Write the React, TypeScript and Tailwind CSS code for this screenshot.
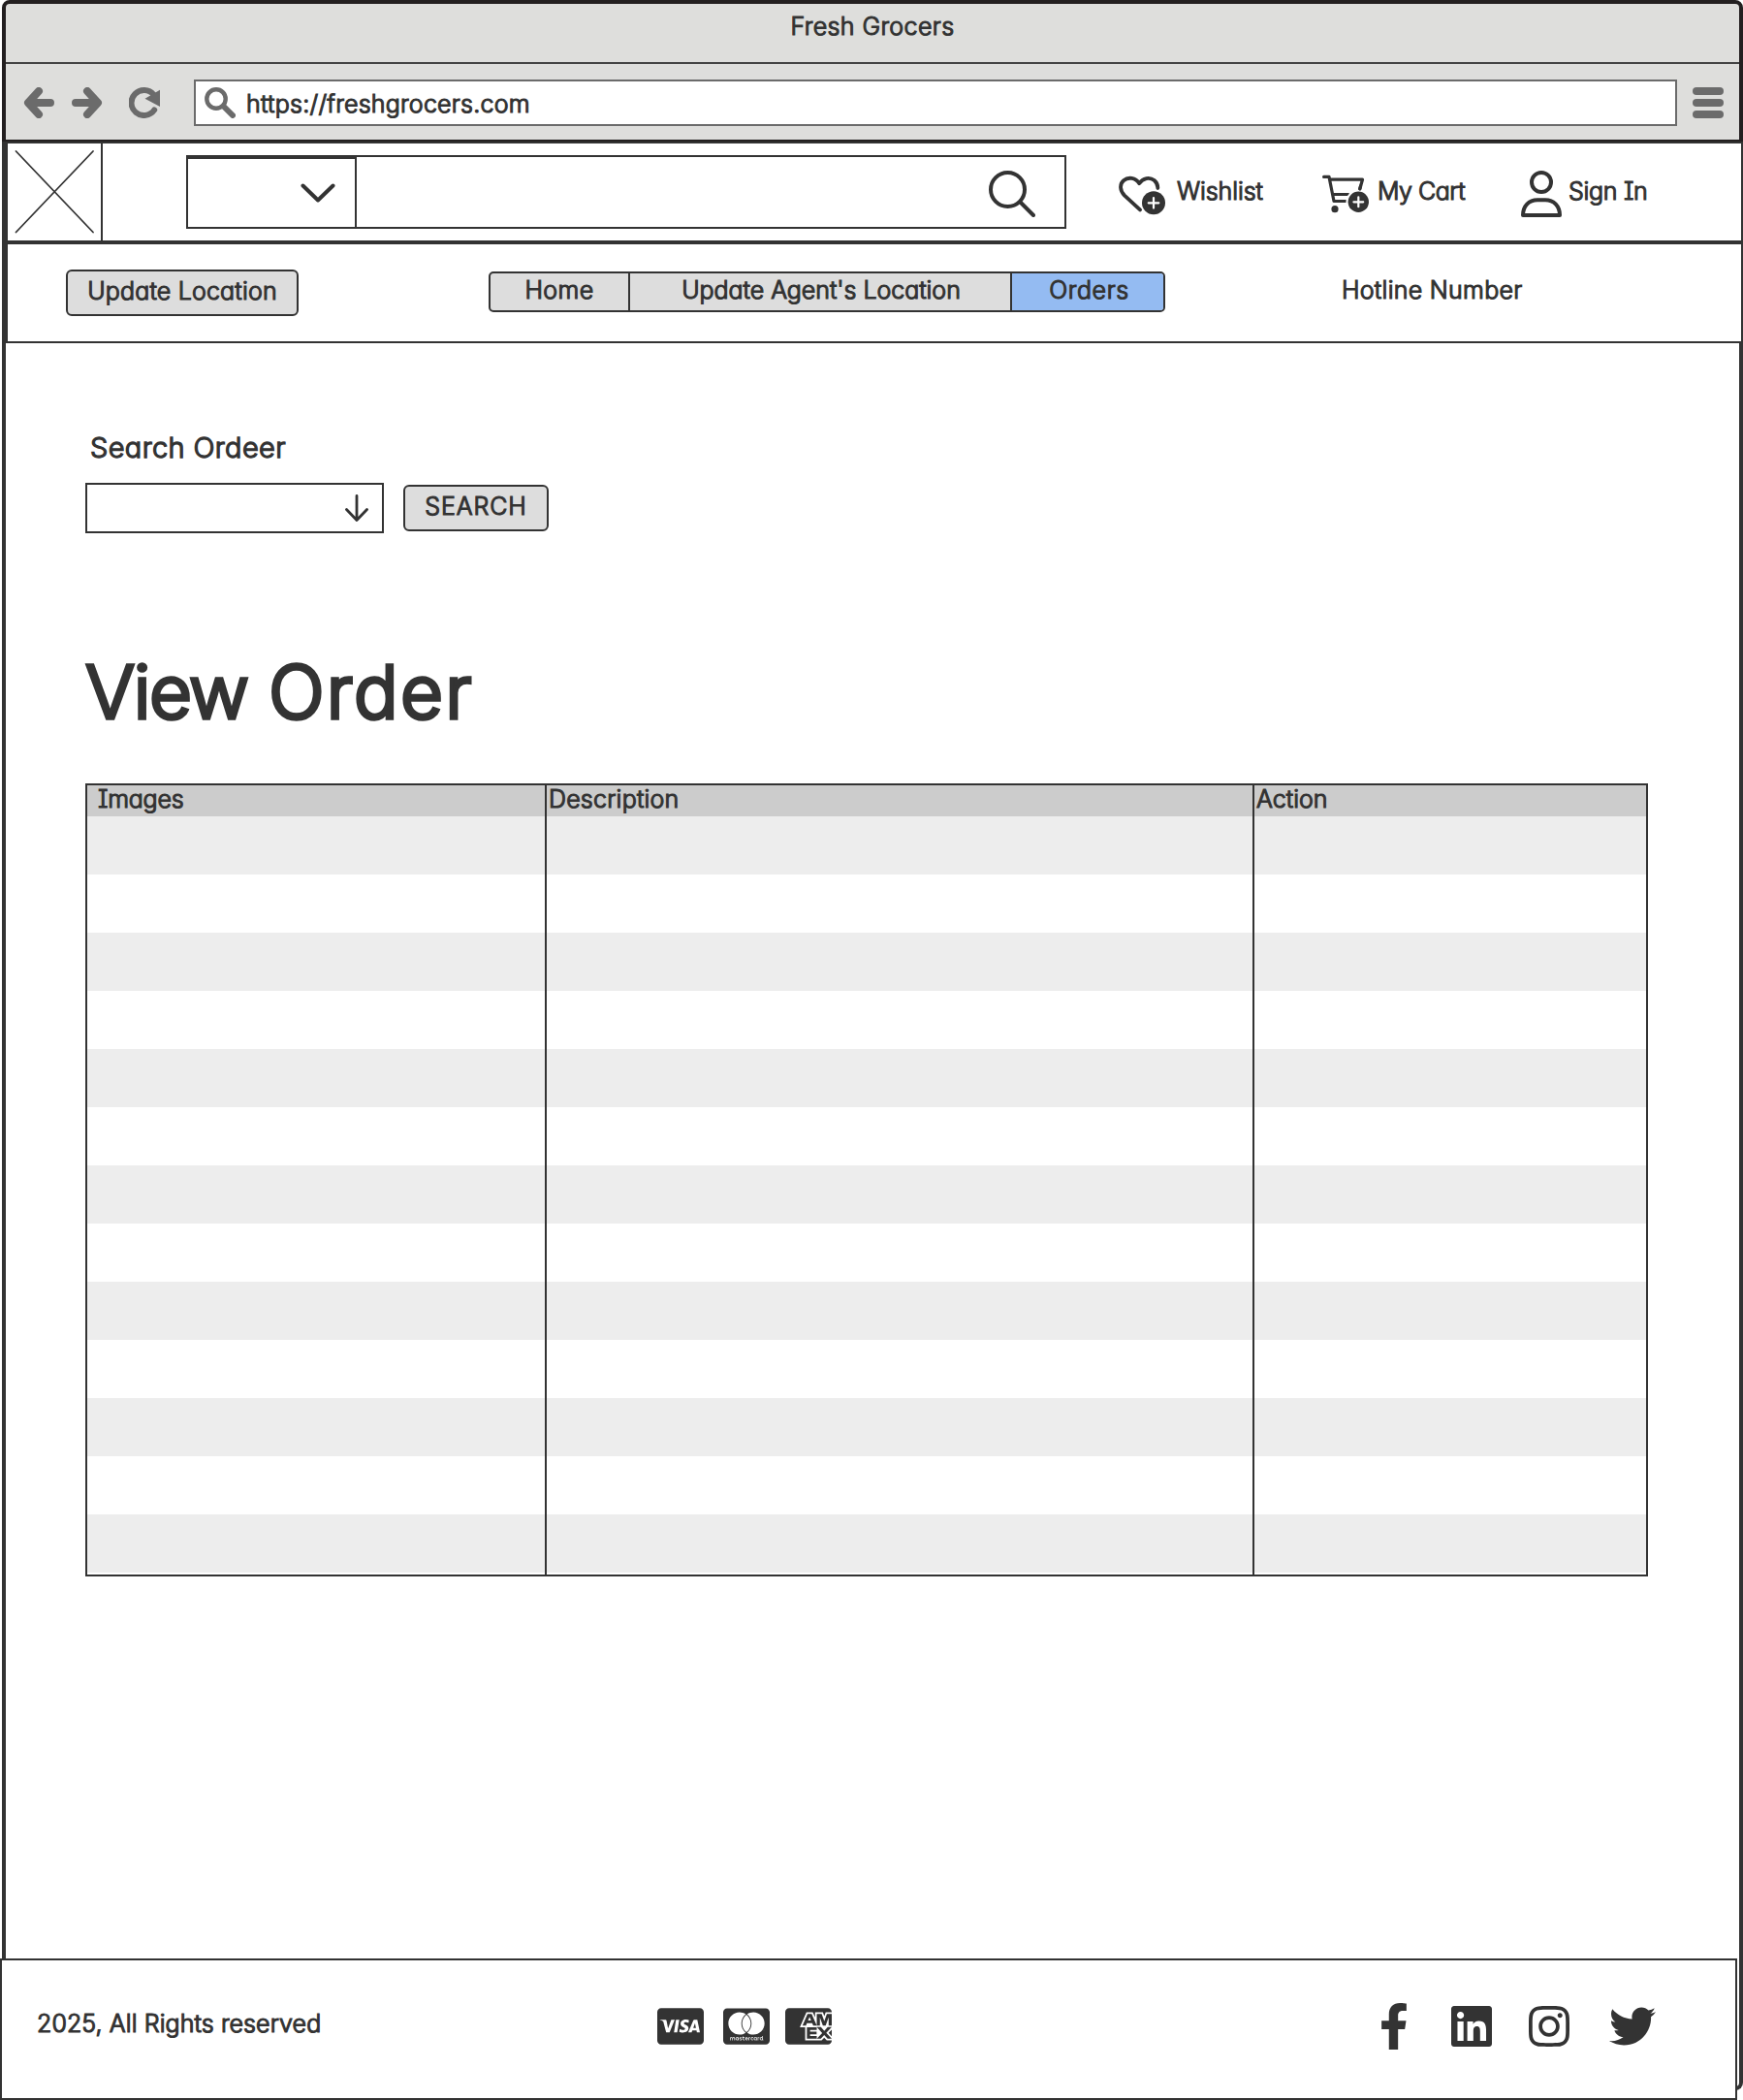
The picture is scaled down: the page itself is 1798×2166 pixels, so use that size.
import type { ReactNode } from "react";
import { FaFacebookF, FaInstagram, FaLinkedin, FaTwitter } from "react-icons/fa";
import { FaCcAmex, FaCcMastercard, FaCcVisa } from "react-icons/fa6";

const STRIPES = Array.from({ length: 13 }, (_, i) => i);

function BrowserChrome() {
  return (
    <div className="h-[146px] rounded-t-lg border-4 border-b-2 border-[#231f20] bg-[#dededc]">
      <div className="h-[62px] border-b-2 border-[#444] pt-2 text-center tracking-[0.4px]">Fresh Grocers</div>
      <div className="flex h-[78px] items-center pt-0.5 text-[#6b6b6b]">
        <svg className="ml-[18px] h-8 w-8" viewBox="0 0 32 32" fill="none" stroke="currentColor" strokeWidth="8" strokeLinecap="round" strokeLinejoin="round">
          <path d="M16 4 5 16 16 28M6 16H28" />
        </svg>
        <svg className="ml-[18px] h-8 w-8" viewBox="0 0 32 32" fill="none" stroke="currentColor" strokeWidth="8" strokeLinecap="round" strokeLinejoin="round">
          <path d="M16 4 27 16 16 28M26 16H4" />
        </svg>
        <svg className="ml-[27px] h-8 w-8" viewBox="0 0 32 32" fill="none">
          <path d="M25.5 7.7A13 13 0 1 0 26.2 23.4" stroke="currentColor" strokeWidth="6" strokeLinecap="round" />
          <path d="M32 2.7V20L16.5 11.7Z" fill="currentColor" />
        </svg>
        <div className="ml-[35px] flex h-12 w-[1530px] items-center border-2 border-[#6b6b6b] bg-white">
          <svg className="ml-[9px] h-8 w-8" viewBox="0 0 32 32" fill="none" stroke="currentColor">
            <circle cx="12" cy="12" r="9.7" strokeWidth="4.4" />
            <path d="M20 20 29 29" strokeWidth="6" strokeLinecap="round" />
          </svg>
          <span className="ml-[11px] pt-px tracking-[0.23px] text-[#333]">https://freshgrocers.com</span>
        </div>
        <div className="ml-4 flex w-8 flex-col gap-1">
          <div className="h-2 rounded-full bg-[#6b6b6b]" />
          <div className="h-2 rounded-full bg-[#6b6b6b]" />
          <div className="h-2 rounded-full bg-[#6b6b6b]" />
        </div>
      </div>
    </div>
  );
}

function HeartPlus() {
  return (
    <svg className="h-12 w-12" viewBox="0 0 48 48" fill="none" stroke="currentColor" strokeLinecap="round">
      <path d="M22 42.4 6 27.6C1 22.6.8 16 5 12.3 10 8 17.4 9.3 21.2 15.2 25 9.5 32 8.3 36.7 12 39.4 14.5 40.4 17.5 40.3 20" strokeWidth="3.8" strokeLinejoin="round" />
      <circle cx="36" cy="35.3" r="12" fill="currentColor" stroke="none" />
      <path d="M36 30V40.6M30.7 35.3H41.3" stroke="white" strokeWidth="2.2" />
    </svg>
  );
}

function CartPlus() {
  return (
    <svg className="h-12 w-12" viewBox="0 0 48 48" fill="none" stroke="currentColor" strokeLinecap="round" strokeLinejoin="round">
      <path d="M1.6 8.4H7L12 33.5H25M7.6 11.2H41.5L38.7 21M10.8 26.5H27" strokeWidth="3.2" />
      <circle cx="13" cy="41.7" r="3.6" fill="currentColor" stroke="none" />
      <circle cx="37.3" cy="34.3" r="12.8" fill="white" stroke="none" />
      <path d="M39.6 18 38.7 21" strokeWidth="3.2" />
      <circle cx="37.3" cy="34.3" r="10.7" fill="currentColor" stroke="none" />
      <path d="M37.3 29.4V39.2M32.4 34.3H42.2" stroke="white" strokeWidth="2.2" />
    </svg>
  );
}

function Header() {
  return (
    <header className="relative flex h-[104px] w-[1792px] items-center border-2 border-[#333] bg-white">
      <svg className="h-[100px] w-[98px] border-r-2 border-[#333]" viewBox="0 0 96 100" fill="none" stroke="#333" strokeWidth="1.8" strokeLinecap="round">
        <path d="M8.5 8 88 91.5M88 8 8.5 91.5" />
      </svg>
      <div className="ml-[86px] flex h-[76px] w-[908px] items-start justify-between border-2 border-[#333]">
        <div className="flex h-[72px] w-[174px] items-center justify-end border-t-2 border-r-2 border-[#333] pr-5">
          <svg className="h-5 w-9" viewBox="0 0 36 20" fill="none" stroke="currentColor" strokeWidth="4" strokeLinecap="round" strokeLinejoin="round">
            <path d="M2.5 2.5 18 17.5 33.5 2.5" />
          </svg>
        </div>
        <svg className="mt-3.5 mr-[30px] h-12 w-12" viewBox="0 0 48 48" fill="none" stroke="currentColor" strokeWidth="4" strokeLinecap="round">
          <circle cx="19.5" cy="19.5" r="17.5" />
          <path d="M32.5 32.5 46 46" />
        </svg>
      </div>
      <div className="ml-[54px] flex items-center">
        <HeartPlus />
        <span className="ml-3 w-[150px] pb-[3px] tracking-[-0.1px]">Wishlist</span>
        <CartPlus />
        <span className="ml-[9px] w-[148px] pb-[3px] tracking-[-0.5px]">My Cart</span>
        <svg className="mt-1 h-12 w-[42px]" viewBox="0 0 42 48" fill="none" stroke="currentColor" strokeWidth="4" strokeLinejoin="round">
          <circle cx="21" cy="12" r="10" />
          <path d="M2 46C2 36.500 8 30.300 17 30.300H25C34 30.300 40 36.500 40 46Z" />
        </svg>
        <span className="ml-[7px] pb-[3px] tracking-[-0.3px]">Sign In</span>
      </div>
    </header>
  );
}

function Nav() {
  return (
    <nav className="relative flex h-[104px] w-[1792px] items-start border-2 border-[#333] bg-white">
      <button className="mt-[26px] ml-[60px] flex h-12 w-60 items-center justify-center rounded-md border-2 border-[#333] bg-[#ddd] pb-1 tracking-[0.17px]">
        Update Location
      </button>
      <div className="mt-7 ml-[196px] flex h-[42px] w-[698px] overflow-hidden rounded-[5px] border-2 border-[#333] bg-[#ddd]">
        <a className="flex w-36 items-center justify-center border-r-2 border-[#333] pb-1 tracking-[0.4px]">Home</a>
        <a className="flex w-[394px] items-center justify-center border-r-2 border-[#333] pb-1 pl-0.5 tracking-[-0.05px]">Update Agent's Location</a>
        <a className="flex flex-1 items-center justify-center bg-[#94bbf2] pb-1 pl-[3px] tracking-[0.6px]">Orders</a>
      </div>
      <span className="mt-8 ml-[182px] tracking-[0.27px]">Hotline Number</span>
    </nav>
  );
}

function Column({ className, title }: { className: string; title: ReactNode }) {
  return (
    <div className={className}>
      {title}
      {STRIPES.map((i) => (
        <div key={i} className="h-[60px] odd:bg-white even:bg-[#ededed]" />
      ))}
    </div>
  );
}

function Orders() {
  return (
    <main className="pl-[82px]">
      <label className="mt-[90px] block pl-[5px] text-[29px] leading-9 tracking-[0.35px] [-webkit-text-stroke:1.3px_#333]">Search Ordeer</label>
      <div className="mt-[18px] flex items-center">
        <div className="flex h-[52px] w-[308px] items-center justify-end border-2 border-[#333] pr-3.5">
          <svg className="h-7 w-6" viewBox="0 0 24 28" fill="none" stroke="currentColor" strokeWidth="2.8" strokeLinecap="round" strokeLinejoin="round">
            <path d="M12 1.500V26.500M1.500 15.500 12 26.500 22.500 15.500" />
          </svg>
        </div>
        <button className="ml-5 flex h-12 w-[150px] items-center justify-center rounded-md border-2 border-[#333] bg-[#ddd] pb-1 tracking-[0.9px]">
          SEARCH
        </button>
      </div>
      <h1 className="mt-[117px] text-[76px] leading-[92px] [-webkit-text-stroke:3.6px_#333]">
        <span className="tracking-[-1.5px]">View</span> <span className="tracking-[2.2px]">Order</span>
      </h1>
      <div className="mt-[49px] flex h-[818px] w-[1612px] border-2 border-[#333]">
        <Column className="w-[474px] border-r-2 border-[#333]" title={<div className="h-8 bg-[#ccc] pl-[11px] leading-7 tracking-[-0.25px]">Images</div>} />
        <Column className="w-[730px] border-r-2 border-[#333]" title={<div className="h-8 bg-[#ccc] pl-0.5 leading-7 tracking-[0.2px]">Description</div>} />
        <Column className="w-[404px]" title={<div className="h-8 bg-[#ccc] pl-0.5 leading-7">Action</div>} />
      </div>
    </main>
  );
}

function Footer() {
  return (
    <footer className="relative -mt-[136px] flex h-[146px] w-[1792px] items-start border-2 border-[#333] bg-white">
      <span className="mt-[50px] ml-9 w-[640px] tracking-[0.08px]">2025, All Rights reserved</span>
      <div className="mt-11 flex">
        <FaCcVisa className="h-12 w-12" />
        <FaCcMastercard className="ml-5 h-12 w-12" />
        <FaCcAmex className="ml-4 h-12 w-12" />
      </div>
      <div className="mt-11 ml-[565px] flex">
        <FaFacebookF className="h-12 w-[30px]" />
        <FaLinkedin className="ml-11 h-12 w-[42px]" />
        <FaInstagram className="ml-[38px] h-12 w-[42px]" />
        <FaTwitter className="ml-[41px] h-12 w-12" />
      </div>
    </footer>
  );
}

export default function App() {
  return (
    <div className="h-[2166px] w-[1798px] overflow-hidden bg-white font-['Inter',sans-serif] text-[25px] leading-[30px] font-light whitespace-nowrap text-[#333] [-webkit-text-stroke:1.15px_#333] [font-feature-settings:'cv11','cv08']">
      <div className="ml-0.5 w-[1796px]">
        <BrowserChrome />
        <div className="h-[2010px] rounded-b-lg border-4 border-t-0 border-[#333]">
          <Header />
          <Nav />
          <Orders />
        </div>
      </div>
      <Footer />
    </div>
  );
}
